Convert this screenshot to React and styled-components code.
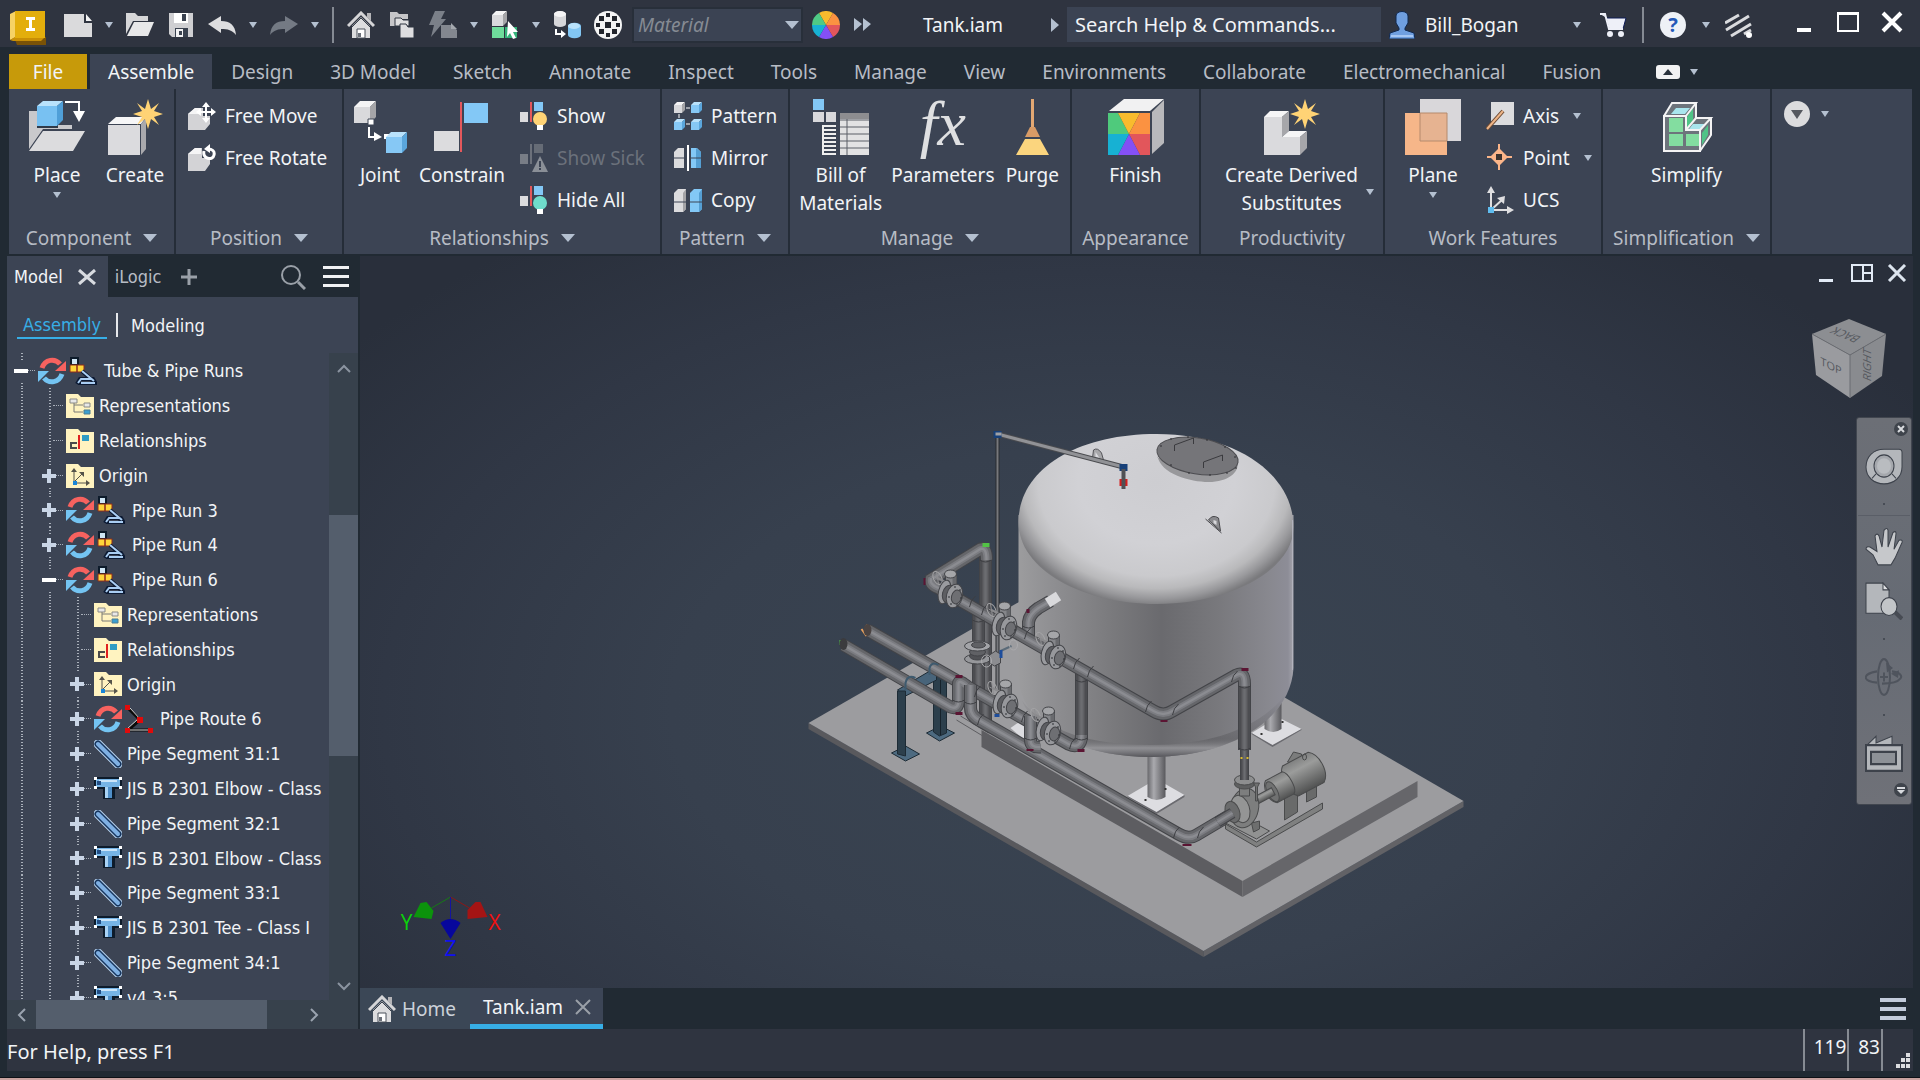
import React, { useState } from "react";
import styled, { createGlobalStyle, css } from "styled-components";

const colors = {
  frame: "#212a33",
  title: "#2f3440",
  ribbon: "#3c4454",
  field: "#3b4353",
  line: "#252d38",
  text: "#f2f4f7",
  muted: "#b7bcc5",
  caret: "#b4c0d0",
  blue: "#37aee6",
  track: "#37414c",
  thumb: "#545e6c",
};

const uiFont = `"Noto Sans", "Open Sans", sans-serif`;
const treeFont = `"DejaVu Sans Condensed", "Noto Sans", sans-serif`;

/* ------------------------------ small pieces ------------------------------ */

const Svg = ({ w = 28, h = 28, children, ...rest }) => (
  <svg
    width={w}
    height={h}
    viewBox={`0 0 ${w} ${h}`}
    aria-hidden="true"
    {...rest}
  >
    {children}
  </svg>
);

const Caret = ({ big }) =>
  big ? (
    <Svg w={14} h={8}>
      <path d="M0 0h14l-7 8z" fill={colors.caret} />
    </Svg>
  ) : (
    <Svg w={8} h={6}>
      <path d="M0 0h8l-4 6z" fill={colors.caret} />
    </Svg>
  );

const Cube = ({ x = 0, y = 0, s = 20, blue }) => {
  const d = Math.round(s / 4);
  const [front, top, side] = blue
    ? ["#86c8f5", "#b9e2fb", "#5aa6dc"]
    : ["#d9d9dc", "#f4f4f5", "#a5a5a8"];
  return (
    <g transform={`translate(${x} ${y})`}>
      <path d={`M0 ${d}h${s - d}v${s - d}H0z`} fill={front} />
      <path d={`M0 ${d}L${d} 0H${s}L${s - d} ${d}z`} fill={top} />
      <path d={`M${s - d} ${d}L${s} 0V${s - d}L${s - d} ${s}z`} fill={side} />
    </g>
  );
};

const Star = ({ x, y }) => (
  <g transform={`translate(${x} ${y})`} fill="#ffd375">
    <path d="M0-15l3 10 8-6-5 8 9 3-9 3 5 8-8-6-3 10-3-10-8 6 5-8-9-3 9-3-5-8 8 6z" />
  </g>
);

const HomeIcon = () => (
  <Svg>
    <path d="M5 15l9-9 9 9v12H5z" fill="#dcdcde" />
    <path d="M20 2h4v8l-4-4z" fill="#b5b5b8" />
    <path d="M1 15L14 2l13 13" fill="none" stroke="#d5d5d7" strokeWidth="3" />
    <path d="M5 16l9-9 9 9" fill="none" stroke="#3a414c" strokeWidth="1" />
    <path d="M10 18h8v9h-8z" fill="#fff" stroke="#4b515b" />
    <path d="M11 22h3v4h-3z" fill="#6a6f78" />
  </Svg>
);

const ColorWheel = () => (
  <Svg>
    <path d="M14 14L7 2A14 14 0 0 1 21 2z" fill="#f9bb2d" />
    <path d="M14 14L21 2A14 14 0 0 1 28 14z" fill="#fb9241" />
    <path d="M14 14H28A14 14 0 0 1 21 26z" fill="#e2565b" />
    <path d="M14 14L21 26A14 14 0 0 1 7 26z" fill="#8450f5" />
    <path d="M14 14L7 26A14 14 0 0 1 0 14z" fill="#17b1d3" />
    <path d="M14 14H0A14 14 0 0 1 7 2z" fill="#4fca85" />
  </Svg>
);

/* --------------------------------- icons --------------------------------- */

const quick = {
  new: (
    <Svg>
      <path d="M0 3h20v9h8v14H0z" fill="#dadadc" />
      <path d="M22 3l6 7h-6z" fill="#f2f2f3" />
    </Svg>
  ),
  open: (
    <Svg>
      <path d="M0 2h9l3 3h10v5H7L0 23z" fill="#d6d6d8" />
      <path d="M8 11h20l-6 14H1z" fill="#e8e8e9" />
    </Svg>
  ),
  save: (
    <Svg>
      <path d="M2 2h24v24H5l-3-3z" fill="#cfcfd2" />
      <path d="M7 2h14v10H7z" fill="#fff" />
      <path d="M15 3h4v7h-4z" fill="#3a4250" />
      <path d="M8 17h13v9H8z" fill="#3a4250" />
      <path d="M9 18h7v8H9z" fill="#f3f3f4" />
      <path d="M12 20h3v4h-3z" fill="#3a4250" />
    </Svg>
  ),
  undo: (
    <Svg>
      <path d="M0 13l13-8v5c9 0 14 4 15 14-4-5-8-6-15-6v4z" fill="#dedee0" />
    </Svg>
  ),
  redo: (
    <Svg>
      <path d="M28 13L15 5v5C6 10 1 14 0 24c4-5 8-6 15-6v4z" fill="#747a84" />
    </Svg>
  ),
  folders: (
    <Svg>
      <path d="M2 1h7l2 2h9v5h-9v7H2z" fill="#c5c5c8" />
      <path d="M7 7h6l2 2h6v6H7z" fill="#dfdfe0" stroke="#2f3440" />
      <path d="M12 13h6l2 3h6v11H12z" fill="#dedee0" stroke="#2f3440" />
    </Svg>
  ),
  bolt: (
    <Svg>
      <path d="M6 0h10l-4 8h5L2 26l3-12H0z" fill="#7b8089" />
      <path d="M12 14h10l6 5v8H12z" fill="#83878f" />
      <path d="M22 12l6 6h-6z" fill="#a4a8ae" />
    </Svg>
  ),
  select: (
    <Svg>
      <Cube x={1} y={0} s={15} />
      <path d="M1 16h12v11H1z" fill="#6fdc9b" />
      <path d="M14 16h12v11H14z" fill="#35b37a" />
      <path d="M17 10l10 11h-5l3 6-3 1-3-6-3 4z" fill="#fff" />
    </Svg>
  ),
  derive: (
    <Svg>
      <path d="M1 3a6 3 0 0 1 12 0v10a6 3 0 0 1-12 0z" fill="#d6d6d9" />
      <ellipse cx="7" cy="3" rx="6" ry="3" fill="#f4f4f5" />
      <path d="M3 18v5h6" fill="none" stroke="#fff" strokeWidth="2" />
      <path d="M8 19l5 4-5 4z" fill="#fff" />
      <path d="M15 15a6 3 0 0 1 13 0v9a6 3 0 0 1-13 0z" fill="#82c6f3" />
      <ellipse cx="21" cy="15" rx="6" ry="3" fill="#b9e2fb" />
    </Svg>
  ),
  ball: (
    <Svg>
      <circle cx="14" cy="14" r="14" fill="#f4f4f4" />
      <g fill="#22252c">
        <path d="M11 11h6v6h-6zM5 5h5v5H5zM18 5h5v5h-5zM5 18h5v5H5zM18 18h5v5h-5z" />
        <path d="M12 2h4v4h-4zM12 22h4v4h-4zM2 12h4v4H2zM22 12h4v4h-4z" />
      </g>
    </Svg>
  ),
};

const FxMark = styled.i`
  flex: none;
  height: 56px;
  color: #dfe0e2;
  font-family: "Liberation Serif", serif;
  font-size: 64px;
  line-height: 50px;
`;

const big = {
  place: (
    <Svg w={56} h={56}>
      <path d="M0 12h9v14h34v4H14L0 50z" fill="#c9c9cc" />
      <path d="M8 8h21v21H8z" fill="#2f3a49" />
      <path d="M8 7h20v20H8z" fill="#78c1f2" />
      <path d="M8 7l6-5h20l-6 5z" fill="#b9e2fb" />
      <path d="M28 7l6-5v19l-6 6z" fill="#4f9fd8" />
      <path d="M14 32h42L44 52H0z" fill="#dcdcde" />
      <path d="M36 3h14v10" fill="none" stroke="#fff" strokeWidth="2" />
      <path d="M44 12h12l-6 11z" fill="#fff" />
    </Svg>
  ),
  create: (
    <Svg w={56} h={56}>
      <path d="M1 26h32v30H1z" fill="#dbdbde" />
      <path d="M1 25l8-7h30l-5 7z" fill="#f6f6f7" />
      <path d="M34 25l5-6v31l-5 6z" fill="#a9a9ad" />
      <Star x={41} y={15} />
    </Svg>
  ),
  joint: (
    <Svg w={56} h={56}>
      <Cube x={2} y={2} s={22} />
      <path d="M16 20h6v6h-6z" fill="#fff" stroke="#3c4454" />
      <path d="M17 28v10h7" fill="none" stroke="#fff" strokeWidth="2" />
      <path d="M22 33l8 5-8 4z" fill="#fff" />
      <path d="M32 35h5v5h-5z" fill="#fff" />
      <Cube x={34} y={33} s={21} blue />
    </Svg>
  ),
  constrain: (
    <Svg w={56} h={56}>
      <path d="M0 32h25v20H0z" fill="#dcdcde" />
      <path d="M30 4h24v20H30z" fill="#83c8f6" />
      <path d="M26 3h2v50h-2z" fill="#e4585c" />
    </Svg>
  ),
  bom: (
    <Svg w={56} h={56}>
      <path d="M0 0h11v11H0z" fill="#83c8f6" />
      <path d="M0 13h11v10H0zM13 13h10v10H13z" fill="#d9d9dc" />
      <path
        d="M10 26v30M10 27h13M10 31h13M10 35h13M10 39h13M10 43h13M10 47h13M10 51h13M10 55h13"
        fill="none"
        stroke="#eee"
        strokeWidth="2"
      />
      <path d="M27 14h29v42H27z" fill="#e2e2e3" />
      <path d="M27 14h29v6H27z" fill="#8d8d90" />
      <path
        d="M27 21h29M27 28h29M27 35h29M27 42h29M27 49h29M34 20v36"
        stroke="#5b5f66"
        fill="none"
      />
    </Svg>
  ),
  fx: <FxMark aria-hidden="true">fx</FxMark>,
  purge: (
    <Svg w={56} h={56}>
      <path d="M27 0h3v29h-3z" fill="#e3a873" />
      <path d="M26 28h5l5 10H21z" fill="#d89b66" />
      <path d="M21 40h15l9 16H12z" fill="#fbd57e" />
    </Svg>
  ),
  finish: (
    <Svg w={56} h={56}>
      <path d="M1 12L16 0h40L42 12z" fill="#f1f1f2" />
      <path d="M44 13L56 1v43L44 55z" fill="#b9b9bc" />
      <path d="M0 14h10l11 21H0z" fill="#4fca7c" />
      <path d="M10 14h22L21 35z" fill="#f9bb2d" />
      <path d="M32 14h10v21H21z" fill="#fb9241" />
      <path d="M21 35h21v21H32z" fill="#e2565b" />
      <path d="M21 35l11 21H10z" fill="#8450f5" />
      <path d="M0 35h21L10 56H0z" fill="#17b1d3" />
    </Svg>
  ),
  derived: (
    <Svg w={56} h={56}>
      <path d="M0 18h18v20h18v18H0z" fill="#dadadd" />
      <path d="M0 18l6-6h19l-7 6z" fill="#f5f5f6" />
      <path d="M18 18l7-6v20l-7 6z" fill="#a6a6aa" />
      <path d="M18 38l7-6h18l-7 6z" fill="#f5f5f6" />
      <path d="M36 38l7-6v17l-7 7z" fill="#a6a6aa" />
      <Star x={41} y={15} />
    </Svg>
  ),
  plane: (
    <Svg w={56} h={56}>
      <path d="M15 0h41v42H15z" fill="#d9d7da" />
      <path d="M0 14h42v42H0z" fill="#f6b689" />
      <path d="M15 14h27v28H15z" fill="#e6b391" stroke="#b58a6c" />
    </Svg>
  ),
  simplify: (
    <Svg w={56} h={56}>
      <path d="M5 17l9-13h22v15h16v19L41 52H5z" fill="#6d747c" />
      <path
        d="M10 19h14v14H10zM10 35h14v12H10zM27 35h13v12H27z"
        fill="#83dda0"
      />
      <path d="M12 15l5-6h14l-5 6z" fill="#a9e6ee" />
      <path d="M28 18l6-9v14l-6 6z" fill="#4fc487" />
      <path d="M30 30l4-5h12l-4 5z" fill="#a9e6ee" />
      <path d="M43 34l6-8v10l-6 10z" fill="#4fc487" />
      <path
        d="M5 17v35h36V31H27V17zM5 17L13 4h24L27 17M37 4v15h15L41 31M52 19v17L41 52M27 31l10-12"
        fill="none"
        stroke="#f4f4f5"
        strokeWidth="2"
      />
    </Svg>
  ),
};

const RelIcon = ({ dim, children }) => (
  <Svg>
    <path d="M0 10h8v10H0z" fill={dim ? "#787d86" : "#dcdcde"} />
    <path d="M14 0h9v9h-9z" fill={dim ? "#666c76" : "#83c8f6"} />
    <path d="M10 0h2v20h-2z" fill={dim ? "#6c717b" : "#e4585c"} />
    {children}
  </Svg>
);

const small = {
  move: (
    <Svg>
      <path d="M0 12l7-6h8v8h7v8l-5 6H0z" fill="#d3d3d6" />
      <path d="M0 12l7-6h6v6z" fill="#f5f5f6" />
      <path d="M18 3v15M11 10h15" stroke="#fff" strokeWidth="2" />
      <path
        d="M18 0l4 5h-8zM18 21l4-5h-8zM8 10l5-4v8zM28 10l-5-4v8z"
        fill="#fff"
      />
    </Svg>
  ),
  rotate: (
    <Svg>
      <path d="M0 10l7-6h7v10h8v6l-5 7H0z" fill="#d3d3d6" />
      <path d="M0 10l7-6h6v6z" fill="#f5f5f6" />
      <path
        d="M16 7c-2 8 9 10 10 4 1-4-2-6-6-6"
        fill="none"
        stroke="#fff"
        strokeWidth="3"
      />
      <path d="M22 0v9l-6-4z" fill="#fff" />
    </Svg>
  ),
  show: (
    <RelIcon>
      <circle cx="20" cy="17" r="7" fill="#ffd375" />
      <path d="M17 23h6v5h-6z" fill="#fff" />
    </RelIcon>
  ),
  sick: (
    <RelIcon dim>
      <path d="M20 12l8 16H12z" fill="#8a8f97" />
      <path d="M19 17h2v6h-2zM19 24h2v2h-2z" fill="#3c4454" />
    </RelIcon>
  ),
  hide: (
    <RelIcon>
      <circle cx="20" cy="17" r="7" fill="#6fdccb" />
      <path d="M17 23h6v5h-6z" fill="#fff" />
    </RelIcon>
  ),
  pattern: (
    <Svg>
      <Cube x={0} y={0} s={11} />
      <Cube x={17} y={0} s={11} blue />
      <Cube x={0} y={17} s={11} blue />
      <Cube x={17} y={17} s={11} blue />
      <path d="M12 6h4M12 22h4M5 12v4" stroke="#fff" strokeWidth="1" />
    </Svg>
  ),
  mirror: (
    <Svg>
      <path d="M0 8l4-4h6v20H0z" fill="#dcdcde" />
      <path d="M17 4h6l4 4v16H17z" fill="#83c8f6" />
      <path d="M22 4l5 4v16h-5z" fill="#559fd3" />
      <path d="M0 14h10M17 14h10" stroke="#3c4454" />
      <path d="M13 1h2v26h-2z" fill="#fff" />
    </Svg>
  ),
  copy: (
    <Svg>
      <path d="M0 7l4-4h8v20l-3 3H0z" fill="#dcdcde" />
      <path d="M16 7l4-4h8v20l-3 3h-9z" fill="#83c8f6" />
      <path d="M9 7l3-4v20l-3 3z" fill="#a5a5a8" />
      <path d="M25 7l3-4v20l-3 3z" fill="#559fd3" />
      <path d="M0 16h12M16 16h12" stroke="#3c4454" />
    </Svg>
  ),
  axis: (
    <Svg>
      <path d="M5 0h23v23H5z" fill="#dcdcde" />
      <path d="M1 27L17 9" stroke="#6b4a34" strokeWidth="4" />
      <path d="M1 27L17 9" stroke="#eeb587" strokeWidth="2" />
    </Svg>
  ),
  point: (
    <Svg>
      <path d="M1 13h25M13 0v26" stroke="#fbb589" strokeWidth="2" />
      <path d="M13 4l9 9-9 9-9-9z" fill="#fbb589" />
      <path d="M10 10h6v6h-6z" fill="#3a3330" />
    </Svg>
  ),
  ucs: (
    <Svg>
      <path
        d="M5 4v20h18M5 24L17 13"
        fill="none"
        stroke="#dfdfe1"
        strokeWidth="2"
      />
      <path d="M5 0l4 7H1zM28 24l-7-4v8zM19 10l-1 8-7-6z" fill="#dfdfe1" />
      <path d="M2 21h6v6H2z" fill="#5fbdf0" />
    </Svg>
  ),
};

const SyncIcon = () => (
  <Svg>
    <path
      d="M4 11C7 2 17 1 22 7"
      fill="none"
      stroke="#f7625f"
      strokeWidth="5"
    />
    <path d="M28 4v10H17z" fill="#f7625f" />
    <path
      d="M24 17C21 26 11 27 6 21"
      fill="none"
      stroke="#74c4f2"
      strokeWidth="5"
    />
    <path d="M0 25V14h11z" fill="#74c4f2" />
  </Svg>
);

const tree = {
  run: (
    <Svg>
      <path d="M2 1h7v7H2z" fill="#cfe6f5" stroke="#0d1b2b" strokeWidth="2" />
      <path d="M1 8h7v7H1zM8 8h7v7H8z" fill="#ffd53a" stroke="#8e2a1a" />
      <path
        d="M13 14l12 11M8 27l3-5h13l3 5H9"
        fill="none"
        stroke="#0c1a33"
        strokeWidth="4"
      />
      <path
        d="M13 14l12 10M9 26l3-4h10M12 26h14"
        fill="none"
        stroke="#a9cdf2"
        strokeWidth="2"
      />
    </Svg>
  ),
  reps: (
    <Svg>
      <path d="M0 2h12l3 3h13v21H0z" fill="#fff3c0" />
      <path
        d="M4 7h7v4H4zM18 11h6v4h-6z"
        fill="#e8e8e8"
        stroke="#8a8a86"
      />
      <path d="M8 11v9h9M8 13h9" fill="none" stroke="#7a7a76" />
      <path d="M18 18h6v4h-6z" fill="#3b9fd0" stroke="#4c7d93" />
    </Svg>
  ),
  rels: (
    <Svg>
      <path d="M0 2h12l3 3h13v21H0z" fill="#fff3c0" />
      <path d="M12 8h2v14h-2z" fill="#e02020" />
      <path d="M16 8h7v6h-7z" fill="#2f9cc4" />
      <path d="M11 16H5v5h6" fill="none" stroke="#4a4a4a" strokeWidth="2" />
    </Svg>
  ),
  origin: (
    <Svg>
      <path d="M0 2h12l3 3h13v21H0z" fill="#fff3c0" />
      <path d="M8 8v13h13M9 19l8-8" fill="none" stroke="#55534a" />
      <path d="M8 6l3 4H5zM24 21l-4-3v6zM18 10v5l-5-5z" fill="#55534a" />
      <path d="M7 19h4v4H7z" fill="#1a86d8" />
    </Svg>
  ),
  route: (
    <Svg>
      <path
        d="M3 3l12 12L3 25h22"
        fill="none"
        stroke="#0b0b0b"
        strokeWidth="3"
      />
      <path d="M5 3l11 12M2 24l11-10M5 25h18" fill="none" stroke="#d5d5d5" />
      <path
        d="M0 0h5v5H0zM12 12h6v6h-6zM0 23h5v5H0zM23 23h5v5h-5z"
        fill="#e00b0b"
      />
    </Svg>
  ),
  segment: (
    <Svg>
      <path
        d="M4 4l20 20"
        stroke="#b8d4f0"
        strokeWidth="9"
        strokeLinecap="round"
      />
      <path
        d="M4 4l20 20"
        stroke="#17365f"
        strokeWidth="7"
        strokeLinecap="round"
      />
      <path
        d="M4 4l20 20"
        stroke="#7fb0e3"
        strokeWidth="4"
        strokeLinecap="round"
      />
    </Svg>
  ),
  fitting: (
    <Svg>
      <path d="M0 2h28v12H0zM9 12h12v12H9z" fill="#0d1b2b" />
      <path d="M2 4h24v8H2z" fill="#76b4e6" />
      <path d="M5 5h18v2H5z" fill="#cbe5fa" />
      <path d="M11 12h3v11h-3z" fill="#a9d3f5" />
      <path d="M14 12h4v11h-4z" fill="#4f8fc9" />
      <path d="M0 2h3v3H0zM25 2h3v3h-3zM0 11h3v3H0zM25 11h3v3h-3z" fill="#fff" />
      <path d="M3 6h4v4H3z" fill="#234f86" />
    </Svg>
  ),
};

/* ---------------------------------- data ---------------------------------- */

const menuTabs = [
  "Assemble",
  "Design",
  "3D Model",
  "Sketch",
  "Annotate",
  "Inspect",
  "Tools",
  "Manage",
  "View",
  "Environments",
  "Collaborate",
  "Electromechanical",
  "Fusion",
];

const nodes = [
  { level: 0, open: true, sync: true, icon: "run", label: "Tube & Pipe Runs" },
  { level: 1, icon: "reps", label: "Representations" },
  { level: 1, icon: "rels", label: "Relationships" },
  { level: 1, open: false, icon: "origin", label: "Origin" },
  { level: 1, open: false, sync: true, icon: "run", label: "Pipe Run 3" },
  { level: 1, open: false, sync: true, icon: "run", label: "Pipe Run 4" },
  { level: 1, open: true, sync: true, icon: "run", label: "Pipe Run 6" },
  { level: 2, icon: "reps", label: "Representations" },
  { level: 2, icon: "rels", label: "Relationships" },
  { level: 2, open: false, icon: "origin", label: "Origin" },
  { level: 2, open: false, sync: true, icon: "route", label: "Pipe Route 6" },
  { level: 2, open: false, icon: "segment", label: "Pipe Segment 31:1" },
  { level: 2, open: false, icon: "fitting", label: "JIS B 2301 Elbow - Class" },
  { level: 2, open: false, icon: "segment", label: "Pipe Segment 32:1" },
  { level: 2, open: false, icon: "fitting", label: "JIS B 2301 Elbow - Class" },
  { level: 2, open: false, icon: "segment", label: "Pipe Segment 33:1" },
  { level: 2, open: false, icon: "fitting", label: "JIS B 2301 Tee - Class I" },
  { level: 2, open: false, icon: "segment", label: "Pipe Segment 34:1" },
  { level: 2, open: false, icon: "fitting", label: "v4 3:5" },
];

/* -------------------------------- title bar ------------------------------- */

const TitleBar = () => (
  <TitleBarStyled>
    <AppButton aria-label="Application menu">
      <Svg w={36} h={34}>
        <path d="M4 26h32v8H7z" fill="#7a5206" />
        <path d="M0 3l6-3v26l-6 3z" fill="#f6d265" />
        <path d="M0 29l5-3h30l-4 4H3z" fill="#c98f06" />
        <path d="M5 0h30v27H5z" fill="#e3ae0c" />
        <path d="M16 6h9v3h-3v8h3v3h-9v-3h3V9h-3z" fill="#fff" />
      </Svg>
    </AppButton>
    <QuickBar>
      <IconButton aria-label="New">{quick.new}</IconButton>
      <Caret />
      <IconButton aria-label="Open">{quick.open}</IconButton>
      <IconButton aria-label="Save">{quick.save}</IconButton>
      <IconButton aria-label="Undo">{quick.undo}</IconButton>
      <Caret />
      <IconButton aria-label="Redo">{quick.redo}</IconButton>
      <Caret />
      <Divider />
      <IconButton aria-label="Home">
        <HomeIcon />
      </IconButton>
      <IconButton aria-label="Projects">{quick.folders}</IconButton>
      <IconButton aria-label="Update">{quick.bolt}</IconButton>
      <Caret />
      <IconButton aria-label="Select">{quick.select}</IconButton>
      <Caret />
      <IconButton aria-label="Derive">{quick.derive}</IconButton>
      <IconButton aria-label="Appearance">{quick.ball}</IconButton>
    </QuickBar>
    <Combo>
      <select aria-label="Material">
        <option>Material</option>
      </select>
      <Svg w={14} h={8}>
        <path d="M0 0h14l-7 8z" fill={colors.caret} />
      </Svg>
    </Combo>
    <WheelButton aria-label="Color">
      <ColorWheel />
    </WheelButton>
    <MoreButton aria-label="More">
      <Svg w={17} h={13}>
        <path d="M0 0l8 6-8 7zM9 0l8 6-8 7z" fill={colors.caret} />
      </Svg>
    </MoreButton>
    <DocTitle>Tank.iam</DocTitle>
    <TitleArrow w={8} h={14}>
      <path d="M0 0l8 7-8 7z" fill={colors.caret} />
    </TitleArrow>
    <SearchInput
      aria-label="Search Help & Commands"
      placeholder="Search Help & Commands..."
    />
    <UserButton>
      <Svg w={26} h={28}>
        <path
          d="M7 5c0-6 12-6 12 0v7l-3 5v2l9 3 1 6H0l1-6 9-3v-2l-3-5z"
          fill="#6f9fe0"
          stroke="#10284f"
        />
        <path d="M2 25h22" stroke="#a5c6f3" strokeWidth="2" />
      </Svg>
      <span>Bill_Bogan</span>
      <Caret />
    </UserButton>
    <RightTools>
      <IconButton aria-label="Cart">
        <Svg>
          <path
            d="M1 3h5l4 15h14l3-11H8"
            fill="#eef0f8"
            stroke="#0c1a55"
            strokeWidth="1"
          />
          <path d="M1 3h5l4 15h14" fill="none" stroke="#eef0f8" strokeWidth="2" />
          <circle cx="11" cy="23" r="3" fill="#eef0f8" />
          <circle cx="22" cy="23" r="3" fill="#eef0f8" />
        </Svg>
      </IconButton>
      <Divider />
      <IconButton aria-label="Help">
        <HelpMark>?</HelpMark>
      </IconButton>
      <Caret />
      <IconButton aria-label="What's new">
        <Svg>
          <path
            d="M0 12L14 4M1 19L24 5M6 25l20-12M19 23l7-4"
            stroke="#dadbde"
            strokeWidth="3"
          />
          <circle cx="24" cy="24" r="3" fill="#fff" />
        </Svg>
      </IconButton>
    </RightTools>
    <WindowControls>
      <IconButton aria-label="Minimize">
        <Svg w={22} h={22}>
          <path d="M4 17h14v4H4z" fill="#fff" />
        </Svg>
      </IconButton>
      <IconButton aria-label="Maximize">
        <Svg w={22} h={22}>
          <path
            d="M1 2h20v18H1z"
            fill="none"
            stroke="#fff"
            strokeWidth="2"
          />
          <path d="M0 1h22v3H0z" fill="#fff" />
        </Svg>
      </IconButton>
      <IconButton aria-label="Close">
        <Svg w={22} h={22}>
          <path d="M2 2l18 18M20 2L2 20" stroke="#fff" strokeWidth="4" />
        </Svg>
      </IconButton>
    </WindowControls>
  </TitleBarStyled>
);

const TitleBarStyled = styled.header`
  display: flex;
  align-items: center;
  height: 47px;
  padding: 0 14px 4px 10px;
  background: ${colors.title};
`;

const bareButton = css`
  display: flex;
  align-items: center;
  justify-content: center;
  padding: 0;
  border: 0;
  background: none;
  color: inherit;
  font: inherit;
  cursor: pointer;
`;

const AppButton = styled.button`
  ${bareButton}
  margin-top: 12px;
`;

const IconButton = styled.button`
  ${bareButton}
  flex: none;
  min-width: 28px;
  height: 28px;
`;

const WheelButton = styled(IconButton)`
  margin-top: 6px;
`;

const QuickBar = styled.div`
  display: flex;
  align-items: center;
  gap: 13px;
  margin: 6px 10px 0 18px;
`;

const Divider = styled.span`
  width: 2px;
  height: 36px;
  background: #858a93;
`;

const Combo = styled.div`
  display: flex;
  align-items: center;
  width: 171px;
  height: 36px;
  margin: 6px 9px 0 0;
  padding-right: 2px;
  border: 2px solid #282f3a;
  background: ${colors.field};

  select {
    flex: 1;
    min-width: 0;
    padding: 0 4px;
    border: 0;
    background: none;
    color: #868b93;
    font: italic 19px ${uiFont};
    appearance: none;
  }
`;

const MoreButton = styled.button`
  ${bareButton}
  margin: 6px 52px 0 14px;
`;

const DocTitle = styled.h1`
  width: 128px;
  margin: 6px 0 0;
  font-size: 19px;
  font-weight: 400;
`;

const TitleArrow = styled(Svg)`
  margin-top: 6px;
`;

const SearchInput = styled.input`
  flex: 1;
  min-width: 0;
  max-width: 314px;
  height: 35px;
  margin: 6px 8px 0;
  padding: 0 8px;
  border: 0;
  background: ${colors.field};
  color: ${colors.text};
  font: 20px ${uiFont};

  &::placeholder {
    color: ${colors.text};
    opacity: 1;
  }
`;

const UserButton = styled.button`
  ${bareButton}
  flex: none;
  gap: 10px;
  width: 192px;
  margin-top: 6px;
  font-size: 19px;

  svg:last-child {
    margin-left: auto;
  }
`;

const RightTools = styled.div`
  display: flex;
  align-items: center;
  gap: 15px;
  margin: 6px auto 0 18px;
`;

const HelpMark = styled.span`
  width: 26px;
  height: 26px;
  border-radius: 50%;
  background: #eef1f6;
  color: #2459b8;
  font-size: 20px;
  font-weight: 700;
  line-height: 26px;
`;

const WindowControls = styled.div`
  display: flex;
  gap: 16px;
`;

/* ---------------------------------- ribbon -------------------------------- */

const BigButton = ({ icon, label, width, drop }) => (
  <BigButtonStyled $width={width}>
    {big[icon]}
    <span>{label}</span>
    {drop && <Caret />}
  </BigButtonStyled>
);

const SmallButton = ({ icon, label, drop, disabled }) => (
  <SmallButtonStyled disabled={disabled}>
    {small[icon]}
    <span>{label}</span>
    {drop && <Caret />}
  </SmallButtonStyled>
);

const Group = ({ title, width, drop, center, children }) => (
  <GroupStyled $width={width} aria-label={title}>
    <GroupBody $center={center}>{children}</GroupBody>
    <GroupTitle>
      {title}
      {drop && <Caret big />}
    </GroupTitle>
  </GroupStyled>
);

const Ribbon = () => {
  const [active, setActive] = useState("Assemble");
  return (
    <>
      <MenuTabs>
        <FileTab>File</FileTab>
        {menuTabs.map((tab) => (
          <MenuTab
            key={tab}
            $active={tab === active}
            onClick={() => setActive(tab)}
          >
            {tab}
          </MenuTab>
        ))}
        <CollapseButton aria-label="Collapse ribbon">
          <Svg w={24} h={14}>
            <rect width="24" height="14" rx="3" fill="#f2f2f3" />
            <path d="M7 10l5-6 5 6z" fill="#2a323c" />
          </Svg>
          <Caret />
        </CollapseButton>
      </MenuTabs>
      <RibbonStyled>
        <Group title="Component" width={167} drop>
          <Pad $size={9} />
          <BigButton icon="place" label="Place" width={78} drop />
          <BigButton icon="create" label="Create" width={78} />
        </Group>
        <Group title="Position" width={168} drop>
          <SmallColumn $pad={12}>
            <SmallButton icon="move" label="Free Move" />
            <SmallButton icon="rotate" label="Free Rotate" />
          </SmallColumn>
        </Group>
        <Group title="Relationships" width={318} drop>
          <BigButton icon="joint" label="Joint" width={72} />
          <BigButton icon="constrain" label="Constrain" width={92} />
          <SmallColumn $pad={12}>
            <SmallButton icon="show" label="Show" />
            <SmallButton icon="sick" label="Show Sick" disabled />
            <SmallButton icon="hide" label="Hide All" />
          </SmallColumn>
        </Group>
        <Group title="Pattern" width={128} drop>
          <SmallColumn $pad={12}>
            <SmallButton icon="pattern" label="Pattern" />
            <SmallButton icon="mirror" label="Mirror" />
            <SmallButton icon="copy" label="Copy" />
          </SmallColumn>
        </Group>
        <Group title="Manage" width={282} drop>
          <BigButton icon="bom" label="Bill of Materials" width={102} />
          <BigButton icon="fx" label="Parameters" width={104} />
          <BigButton icon="purge" label="Purge" width={76} />
        </Group>
        <Group title="Appearance" width={129} center>
          <BigButton icon="finish" label="Finish" width={90} />
        </Group>
        <Group title="Productivity" width={184}>
          <Pad $size={16} />
          <BigButton
            icon="derived"
            label="Create Derived Substitutes"
            width={149}
          />
          <SideCaret>
            <Caret />
          </SideCaret>
        </Group>
        <Group title="Work Features" width={218}>
          <BigButton icon="plane" label="Plane" width={96} drop />
          <SmallColumn $pad={5}>
            <SmallButton icon="axis" label="Axis" drop />
            <SmallButton icon="point" label="Point" drop />
            <SmallButton icon="ucs" label="UCS" />
          </SmallColumn>
        </Group>
        <Group title="Simplification" width={169} drop center>
          <BigButton icon="simplify" label="Simplify" width={90} />
        </Group>
        <Overflow aria-label="Ribbon options">
          <Svg>
            <circle cx="14" cy="14" r="13" fill="#dcdcde" />
            <path d="M8 10h12l-6 9z" fill="#55585f" />
          </Svg>
          <Caret />
        </Overflow>
      </RibbonStyled>
    </>
  );
};

const MenuTabs = styled.nav`
  display: flex;
  align-items: stretch;
  gap: 1px;
  height: 42px;
  padding: 7px 8px 0 9px;
  font-size: 19px;
`;

const MenuTab = styled.button`
  ${bareButton}
  padding: 0 18px;
  background: ${(p) => (p.$active ? colors.ribbon : "transparent")};
  color: ${(p) => (p.$active ? colors.text : colors.muted)};
`;

const FileTab = styled.button`
  ${bareButton}
  width: 78px;
  margin-right: 2px;
  background: #c79a0a;
  color: ${colors.text};
`;

const CollapseButton = styled.button`
  ${bareButton}
  gap: 10px;
  margin-left: 36px;
`;

const RibbonStyled = styled.section`
  display: flex;
  height: 165px;
  margin: 0 8px 0 9px;
  background: ${colors.ribbon};
  font-size: 19px;
`;

const GroupStyled = styled.section`
  display: flex;
  flex-direction: column;
  flex: none;
  width: ${(p) => p.$width}px;
  padding-top: 6px;
  border-right: 2px solid ${colors.line};
`;

const GroupBody = styled.div`
  display: flex;
  height: 126px;
  justify-content: ${(p) => (p.$center ? "center" : "flex-start")};
`;

const GroupTitle = styled.h2`
  display: flex;
  align-items: center;
  justify-content: center;
  gap: 12px;
  height: 33px;
  margin: 0;
  color: ${colors.muted};
  font-size: 19px;
  font-weight: 400;
`;

const BigButtonStyled = styled.button`
  ${bareButton}
  flex-direction: column;
  justify-content: flex-start;
  width: ${(p) => p.$width}px;
  padding-top: 4px;
  line-height: 28px;

  span {
    margin: 6px 0 3px;
  }
`;

const SmallColumn = styled.div`
  display: flex;
  flex-direction: column;
  padding-left: ${(p) => p.$pad}px;
`;

const SmallButtonStyled = styled.button`
  ${bareButton}
  justify-content: flex-start;
  gap: 9px;
  height: 42px;
  white-space: nowrap;

  &:disabled {
    color: #6b717b;
  }

  svg:nth-child(3) {
    margin-left: 5px;
  }
`;

const Pad = styled.span`
  flex: none;
  width: ${(p) => p.$size}px;
`;

const SideCaret = styled.span`
  padding-top: 80px;
`;

const Overflow = styled.button`
  ${bareButton}
  align-self: flex-start;
  gap: 10px;
  margin: 11px 0 0 11px;
`;

/* ------------------------------ model browser ----------------------------- */

const TreeRow = ({ node }) => (
  <TreeRowStyled>
    {Array.from({ length: node.level }, (_, i) => (
      <Guide key={i} />
    ))}
    <ToggleCell>
      {node.open !== undefined && (
        <Toggle aria-label={node.open ? "Collapse" : "Expand"}>
          <Svg w={14} h={14}>
            <path
              d={node.open ? "M0 5h14v4H0z" : "M0 5h5V0h4v5h5v4H9v5H5V9H0z"}
              fill={node.open ? "#fff" : "#c9d5e6"}
            />
          </Svg>
        </Toggle>
      )}
    </ToggleCell>
    {node.sync && <SyncIcon />}
    {tree[node.icon]}
    <span>{node.label}</span>
  </TreeRowStyled>
);

const Browser = () => (
  <BrowserStyled>
    <PanelTabs>
      <PanelTab $active>
        Model
        <Svg w={18} h={16}>
          <path d="M1 1l16 14M17 1L1 15" stroke="#d8dbe0" strokeWidth="3" />
        </Svg>
      </PanelTab>
      <PanelTab>
        iLogic
        <Svg w={18} h={18}>
          <path d="M9 1v16M1 9h16" stroke="#9aa0a8" strokeWidth="3" />
        </Svg>
      </PanelTab>
      <PanelTools>
        <IconButton aria-label="Search">
          <Svg w={26} h={26}>
            <circle
              cx="11"
              cy="11"
              r="9"
              fill="none"
              stroke="#9aa0a8"
              strokeWidth="2"
            />
            <path d="M18 18l7 7" stroke="#9aa0a8" strokeWidth="3" />
          </Svg>
        </IconButton>
        <IconButton aria-label="Menu">
          <Svg w={26} h={22}>
            <path d="M0 0h26v3H0zM0 9h26v3H0zM0 18h26v3H0z" fill="#f0f1f3" />
          </Svg>
        </IconButton>
      </PanelTools>
    </PanelTabs>
    <SubTabs>
      <SubTab $active>Assembly</SubTab>
      <SubTab>Modeling</SubTab>
    </SubTabs>
    <TreeArea>
      <TreeList>
        {nodes.map((node, i) => (
          <TreeRow key={i} node={node} />
        ))}
      </TreeList>
      <VScroll>
        <Svg w={14} h={9}>
          <path d="M1 8l6-6 6 6" fill="none" stroke="#8b94a0" strokeWidth="2" />
        </Svg>
        <VThumb />
        <Svg w={14} h={9}>
          <path d="M1 1l6 6 6-6" fill="none" stroke="#8b94a0" strokeWidth="2" />
        </Svg>
      </VScroll>
    </TreeArea>
    <HScroll>
      <Svg w={9} h={14}>
        <path d="M8 1L2 7l6 6" fill="none" stroke="#9aa3af" strokeWidth="2" />
      </Svg>
      <HThumb />
      <Svg w={9} h={14}>
        <path d="M1 1l6 6-6 6" fill="none" stroke="#9aa3af" strokeWidth="2" />
      </Svg>
    </HScroll>
  </BrowserStyled>
);

const BrowserStyled = styled.aside`
  display: flex;
  flex-direction: column;
  width: 351px;
  min-height: 0;
  background: ${colors.ribbon};
  font-family: ${treeFont};
  font-size: 18px;
`;

const PanelTabs = styled.div`
  display: flex;
  height: 41px;
  background: ${colors.frame};
`;

const PanelTab = styled.button`
  ${bareButton}
  gap: ${(p) => (p.$active ? 15 : 19)}px;
  padding: 0 ${(p) => (p.$active ? 12 : 7)}px 0 7px;
  background: ${(p) => (p.$active ? colors.ribbon : "transparent")};
  color: ${(p) => (p.$active ? colors.text : colors.muted)};
`;

const PanelTools = styled.div`
  display: flex;
  align-items: center;
  gap: 15px;
  margin-left: auto;
  padding-right: 8px;
`;

const SubTabs = styled.div`
  display: flex;
  align-items: center;
  height: 56px;
  padding-left: 10px;
`;

const SubTab = styled.button`
  ${bareButton}
  height: 28px;
  padding: 0 6px;
  border-bottom: 2px solid ${(p) => (p.$active ? colors.blue : "transparent")};
  color: ${(p) => (p.$active ? colors.blue : colors.text)};

  & + & {
    height: 24px;
    margin-left: 9px;
    padding-left: 13px;
    border-left: 2px solid #e6e8eb;
    border-bottom: 0;
  }
`;

const TreeArea = styled.div`
  display: flex;
  flex: 1;
  min-height: 0;
`;

const TreeList = styled.ul`
  flex: 1;
  min-width: 0;
  margin: 0;
  padding: 0;
  overflow: hidden;
  list-style: none;
`;

const dotted = css`
  background: repeating-linear-gradient(#a9b0ba 0 1px, transparent 1px 3px) 14px
    0 / 2px 100% no-repeat;
`;

const TreeRowStyled = styled.li`
  display: flex;
  align-items: center;
  height: 35px;
  white-space: nowrap;

  &:nth-child(5n) {
    height: 34px;
  }

  > svg {
    flex: none;
    margin-left: 3px;
  }

  > svg + svg {
    margin-right: 2px;
  }

  > span:last-child {
    margin-left: 5px;
  }
`;

const Guide = styled.span`
  flex: none;
  align-self: stretch;
  width: 28px;
  ${dotted}
`;

const ToggleCell = styled.span`
  display: flex;
  flex: none;
  align-items: center;
  align-self: stretch;
  width: 28px;
  ${dotted}

  &::after {
    content: "";
    width: 10px;
    margin-left: auto;
    border-top: 1px dotted #a9b0ba;
  }
`;

const Toggle = styled.button`
  ${bareButton}
  width: 16px;
  height: 22px;
  margin-left: 7px;
  background: ${colors.ribbon};

  svg {
    flex: none;
  }
`;

const VScroll = styled.div`
  display: flex;
  flex-direction: column;
  align-items: center;
  width: 29px;
  padding: 11px 0 9px;
  background: ${colors.track};
`;

const VThumb = styled.div`
  width: 100%;
  height: 241px;
  margin: 142px 0 auto;
  background: ${colors.thumb};
`;

const HScroll = styled.div`
  display: flex;
  align-items: center;
  height: 29px;
  padding: 0 39px 0 10px;
  background: ${colors.track};
`;

const HThumb = styled.div`
  width: 231px;
  height: 100%;
  margin: 0 auto 0 10px;
  background: ${colors.thumb};
`;

/* -------------------------------- 3D drawing ------------------------------- */

// one pipe: dark outline, body and a lighter streak along the centre
const Pipe = ({ d, w = 12, dark }) => (
  <g fill="none" strokeLinejoin="round">
    <path d={d} stroke="#434448" strokeWidth={w + 1} />
    <path d={d} stroke={dark ? "#4c4d51" : "#65666a"} strokeWidth={w - 1} />
    <path d={d} stroke={dark ? "#606165" : "#7b7c81"} strokeWidth={w / 2} />
    <path d={d} stroke={dark ? "#6c6d71" : "#8b8c91"} strokeWidth={w / 5} />
  </g>
);

const Valve = ({ x, y }) => (
  <g transform={`translate(${x} ${y})`} stroke="#434448">
    <ellipse
      cx="-13"
      cy="-16"
      rx="4"
      ry="7"
      fill="none"
      stroke="#a3a3a5"
      transform="rotate(-25 -13 -16)"
    />
    <path d="M-16-17l6 3M-14-22l2 12" stroke="#8f8f92" />
    <path d="M-13-16l10 5" stroke="#8a8a8d" strokeWidth="2" />
    <path d="M-5-19v15H6v-15z" fill="#85868a" />
    <path d="M2-17v12h4v-13z" fill="#696a6e" stroke="none" />
    <ellipse cx="0" cy="-20" rx="6" ry="4" fill="#a5a6a9" />
    <ellipse
      cx="-6"
      cy="-2"
      rx="6"
      ry="12"
      fill="#9a9b9f"
      transform="rotate(14 -6 -2)"
    />
    <ellipse
      cx="-2"
      cy="0"
      rx="6"
      ry="9"
      fill="#5d5e62"
      transform="rotate(14 -2 0)"
    />
    <ellipse
      cx="4"
      cy="2"
      rx="8"
      ry="12"
      fill="#97989c"
      transform="rotate(14 4 2)"
    />
    <ellipse
      cx="6"
      cy="3"
      rx="5"
      ry="7"
      fill="#6e6f73"
      transform="rotate(14 6 3)"
    />
    <path
      d="M4-7h1M9-4h1M10 4h1M6 11h1M0 10h1M-2 3h1"
      stroke="#2f3034"
      strokeWidth="2"
    />
  </g>
);

const Rings = ({ points }) => (
  <g stroke="#3d3e42" strokeWidth="1">
    {points.map(([x, y, vertical]) => (
      <path
        key={`${x}-${y}`}
        d={
          vertical
            ? `M${x - 6} ${y}q6 4 12 0`
            : `M${x + 3} ${y - 6}q-5 4 -6 11`
        }
        fill="none"
      />
    ))}
  </g>
);

const Model = () => (
  <ModelSvg
    viewBox="360 256 1552 732"
    preserveAspectRatio="xMidYMid meet"
    role="img"
    aria-label="Tank assembly"
  >
    <defs>
      <linearGradient id="body" x1="0" x2="1">
        <stop offset="0" stopColor="#9c9c9e" />
        <stop offset="0.12" stopColor="#8f8f92" />
        <stop offset="0.35" stopColor="#79797c" />
        <stop offset="0.52" stopColor="#6a6a6e" />
        <stop offset="0.72" stopColor="#78787c" />
        <stop offset="0.92" stopColor="#898990" />
        <stop offset="0.98" stopColor="#8d8d97" />
        <stop offset="1" stopColor="#a4a4ac" />
      </linearGradient>
      <radialGradient
        id="dome"
        gradientUnits="userSpaceOnUse"
        cx="0"
        cy="0"
        r="1"
        gradientTransform="translate(1156 482) scale(156 124)"
      >
        <stop offset="0" stopColor="#cdcdd1" />
        <stop offset="0.5" stopColor="#d1d1d5" />
        <stop offset="0.76" stopColor="#cacacd" />
        <stop offset="0.86" stopColor="#b9b9bb" />
        <stop offset="0.94" stopColor="#98989b" />
        <stop offset="1" stopColor="#7a7a7d" />
      </radialGradient>
      <linearGradient id="belly" x1="0" x2="0" y1="0" y2="1">
        <stop offset="0" stopColor="#606064" stopOpacity="0" />
        <stop offset="0.72" stopColor="#505054" stopOpacity="0.4" />
        <stop offset="0.86" stopColor="#98989c" stopOpacity="0.8" />
        <stop offset="1" stopColor="#55555a" stopOpacity="1" />
      </linearGradient>
      <linearGradient id="leg" x1="0" x2="1">
        <stop offset="0" stopColor="#68686c" />
        <stop offset="0.35" stopColor="#aaaaae" />
        <stop offset="1" stopColor="#59595d" />
      </linearGradient>
      <linearGradient id="motor" x1="0" x2="0" y1="0" y2="1">
        <stop offset="0" stopColor="#7f8080" />
        <stop offset="0.3" stopColor="#9b9c9b" />
        <stop offset="1" stopColor="#515252" />
      </linearGradient>
    </defs>

    {/* base slab and plinth */}
    <path d="M808 723l395 228v6L808 729z" fill="#59595d" />
    <path d="M1203 951l260-150v6l-260 150z" fill="#626266" />
    <path d="M808 723l261-150 394 228-260 150z" fill="#9c9c9f" />
    <path d="M981 730l261 151v16L981 747z" fill="#5d5d61" />
    <path d="M1242 881l175-100v16l-175 100z" fill="#66666a" />
    <path
      d="M956 720l28 17M960 716l28 17M964 712l28 17"
      stroke="#5d5d61"
      fill="none"
    />

    {/* tank legs */}
    <g>
      <path d="M1010 728l10-7 12 6-8 13z" fill="#dcdce0" />
      <path d="M1251 733l26-16 24 12-29 17z" fill="#dddde1" />
      <path d="M1251 733l21 12 29-16v1l-29 17-21-13z" fill="#6b6b70" />
      <path d="M1264 700h17v29q-8 6-17 0z" fill="url(#leg)" />
      <path d="M1127 796l29-17 28 16-28 18z" fill="#dddde1" />
      <path d="M1127 796l29 16 28-17v2l-28 17-29-17z" fill="#6b6b70" />
      <path d="M1147 750h18v47q-9 6-18 0z" fill="url(#leg)" />
      <path
        d="M1260 734h2M1281 722h2M1144 800h2M1164 789h2"
        stroke="#333"
        strokeWidth="2"
      />
    </g>

    {/* tank */}
    <path
      d="M1018 515V678C1022 730 1085 757 1150 757C1227 757 1290 722 1293 668V515z"
      fill="url(#body)"
    />
    <path
      d="M1021 700C1036 736 1092 757 1150 757C1215 757 1268 734 1287 692C1262 726 1215 745 1150 745C1092 745 1045 732 1021 700z"
      fill="url(#belly)"
    />
    <path
      d="M1018 522C1018 470 1075 434 1156 434C1237 434 1293 475 1293 527C1293 570 1230 604 1156 604C1082 604 1018 570 1018 522z"
      fill="url(#dome)"
    />
    <path d="M1292 520v150" stroke="#b3b3bd" />

    {/* manhole */}
    <g>
      <path
        d="M1157 456C1160 474 1190 482 1208 482C1228 482 1238 472 1237 464L1237 458H1157z"
        fill="#98989b"
      />
      <ellipse
        cx="1197"
        cy="456"
        rx="41"
        ry="18"
        transform="rotate(9 1197 456)"
        fill="#757579"
        stroke="#4c4c50"
      />
      <path
        d="M1174 451v-6l19-7v6M1203 468v-6l19-7v6"
        fill="none"
        stroke="#3a3a3e"
        strokeWidth="1"
      />
      <path
        d="M1160 446h1M1170 439h1M1187 437h1M1206 440h1M1224 447h1M1234 457h1M1235 468h1M1226 473h1M1209 475h1M1188 473h1M1170 465h1"
        stroke="#2f2f33"
        strokeWidth="2"
      />
    </g>

    {/* lifting lugs */}
    <path
      d="M1092 458l1-8q4-3 8 3l2 7zM1089 458l16 4"
      fill="#a7a7aa"
      stroke="#55555a"
    />
    <path d="M1095 457v-5l4 6z" fill="#dcdce0" />
    <path
      d="M1208 520q4-6 10-2l2 13zM1205 519l16 14"
      fill="#8a8a8e"
      stroke="#4a4a4e"
    />
    <path d="M1213 520l3 1v4l-3-2z" fill="#d8d8dc" />

    {/* thin vent line */}
    <path d="M997 437V690" stroke="#2b2d31" strokeWidth="4" />
    <path d="M997 437V690" stroke="#77787c" strokeWidth="2" />
    <path d="M997 434l126 33" stroke="#4a4b4f" strokeWidth="5" />
    <path d="M997 434l126 33" stroke="#919296" strokeWidth="3" />
    <path d="M993 431h8v7h-8zM1119 464h8v7h-8z" fill="#174079" />
    <path d="M1119 479h8v7h-8z" fill="#d41f1f" />
    <path d="M1123 469v20" stroke="#505155" strokeWidth="4" />
    <path d="M995 434h6" stroke="#a0a1a5" strokeWidth="3" />

    {/* steel supports */}
    <g stroke="#1d2b35">
      <path d="M926 733l14-7 14 7-15 8z" fill="#4d6a80" />
      <path d="M933 675h13v58l-7 3-6-4z" fill="#2c3f4c" />
      <path d="M940 680v55" stroke="#16222b" />
      <path d="M891 753l14-7 14 8-14 7z" fill="#4d6a80" />
      <path d="M897 690l34-20 5 4v6l-31 16z" fill="#48647a" />
      <path d="M897 691h8v65l-8-2z" fill="#2c3f4c" />
    </g>

    {/* pipe lines, back to front */}
    <Pipe d="M985 553V720" dark />
    <Pipe d="M928 581L980 549Q986 547 986 560" />
    <Pipe d="M978 612V692" dark />
    <Pipe d="M1081 672V740" dark />
    <Pipe d="M867 630L1068 744Q1081 750 1081 735" />
    <Pipe d="M843 645L950 707Q958 710 958 700V684Q958 679 966 686" />
    <Pipe d="M970 685V708Q970 716 980 721L1178 834Q1188 840 1196 835L1228 816" />
    <Pipe d="M1030 716V740Q1030 748 1040 747" />
    <Pipe d="M1028 640V622Q1029 614 1038 608L1050 601" />
    <path d="M1047 603l11-7" stroke="#d9d9dc" strokeWidth="10" />
    <Pipe d="M931 578Q928 584 938 588L1153 711Q1163 717 1172 711L1236 675Q1244 671 1244 684V690" />
    <Pipe d="M1244 686V750" dark />
    <Pipe d="M1244 750V782" w={8} dark />
    <Rings
      points={[
        [972, 602],
        [984, 610],
        [1027, 634],
        [1076, 664],
        [1090, 672],
        [1148, 707],
        [1175, 710],
        [1234, 677],
        [977, 692],
        [1024, 717],
        [1072, 744],
        [980, 720],
        [1176, 833],
        [1200, 833],
        [985, 560, true],
        [978, 620, true],
        [1081, 680, true],
        [1081, 738, true],
        [1244, 686, true],
        [1244, 748, true],
        [958, 700, true],
        [970, 702, true],
        [1030, 738, true],
        [1028, 626, true],
      ]}
    />

    {/* U-bolts */}
    <path
      d="M905 690v-7q2-9 10-5M929 675v-7q2-7 9-3"
      fill="none"
      stroke="#3e5a6e"
      strokeWidth="2"
    />

    {/* vertical line valve */}
    <g stroke="#434448">
      <ellipse cx="977" cy="659" rx="13" ry="5" fill="#96979b" />
      <ellipse cx="977" cy="656" rx="8" ry="4" fill="#505155" />
      <ellipse cx="977" cy="652" rx="8" ry="4" fill="#606165" />
      <ellipse cx="977" cy="646" rx="13" ry="5" fill="#a3a4a8" />
      <ellipse cx="978" cy="645" rx="7" ry="3" fill="#606165" />
      <path d="M989 655l6-4 5 3v9l-6 3-5-3z" fill="#8b8c90" />
      <path d="M1000 651l11-5" stroke="#5a6a78" strokeWidth="2" />
      <ellipse cx="1013" cy="645" rx="4" ry="5" fill="none" stroke="#a9a9ac" />
      <ellipse cx="986" cy="661" rx="5" ry="6" fill="none" stroke="#a9a9ac" />
    </g>

    {[
      [950, 594],
      [1004, 626],
      [1053, 655],
      [1005, 704],
      [1048, 731],
    ].map(([x, y]) => (
      <Valve key={x * y} x={x} y={y} />
    ))}

    {/* connection markers */}
    <path d="M982 543h7v4h-7zM839 640h3v5h-3z" fill="#53c246" />
    <path d="M999 650h3v8h-3zM994 714h5v3h-5z" fill="#1d4d9c" />
    <path
      d="M923 578h2v7h-2zM1026 609h3v4h-3zM955 675h7v3h-7zM955 712h7v3h-7zM1026 749h7v2h-7zM1077 749h7v3h-7zM1160 720h7v2h-7zM1241 668h7v3h-7zM1182 844h9v2h-9z"
      fill="#5b1533"
    />
    <path d="M861 629l5 7M865 627l2-2" stroke="#e8a15f" strokeWidth="2" />
    <ellipse cx="843" cy="644" rx="4" ry="6" fill="#3b3b3e" />
    <ellipse cx="867" cy="630" rx="4" ry="6" fill="#4a4342" />

    {/* pump and motor */}
    <g stroke="#4a4b4c">
      <path d="M1225 824l31 18 66-39v6l-66 38-31-18z" fill="#7f8080" />
      <path d="M1225 823l14-8 30 16-13 8z" fill="#919292" />
      <path d="M1253 832l6-3v-8l-8 2z" fill="#6d6e6e" />
      <path
        d="M1284 788h13v24l-13 8zM1306 787l10-5v15l-10 5z"
        fill="#696a6a"
      />
      <path d="M1287 762l6-10 8 2v10z" fill="#7b7c7c" />
      <g transform="rotate(-28 1305 773)">
        <path
          d="M1288 756h29q7 5 7 17t-7 17h-29q-6-5-6-17t6-17z"
          fill="url(#motor)"
        />
        <path
          d="M1266 761h19q4 3 4 13t-4 12h-19q-5-3-5-12t5-13z"
          fill="url(#motor)"
        />
        <ellipse cx="1267" cy="774" rx="5" ry="11" fill="#707171" />
        <path d="M1243 770h25v8h-25z" fill="url(#motor)" />
      </g>
      <ellipse cx="1304" cy="757" rx="2" ry="3" fill="none" />
      <ellipse
        cx="1244"
        cy="808"
        rx="14"
        ry="20"
        fill="#7d7e7e"
        transform="rotate(12 1244 808)"
      />
      <ellipse
        cx="1240"
        cy="809"
        rx="9"
        ry="14"
        fill="#949595"
        transform="rotate(-18 1240 809)"
      />
      <ellipse
        cx="1232"
        cy="812"
        rx="7"
        ry="11"
        fill="#6a6b6c"
        transform="rotate(-20 1232 812)"
      />
      <path d="M1239 786h10v10h-10z" fill="#7d7e7e" />
      <ellipse cx="1244" cy="784" rx="10" ry="5" fill="#5e5f60" />
      <ellipse cx="1244" cy="780" rx="10" ry="5" fill="#8d8e8f" />
      <path d="M1253 783h6l-2 4v14h-2v-14z" fill="#707171" />
    </g>
    <Pipe d="M1244 770V780" w={8} dark />
    <Pipe d="M1217 822L1232 813" w={10} />
    <path d="M1240 758h2M1246 758h2" stroke="#d9b92c" strokeWidth="2" />

    {/* axis triad */}
    <g fontFamily="Open Sans, sans-serif" fontSize="21" textAnchor="middle">
      <path d="M450 897l-19 11" stroke="#167a16" />
      <path d="M450 897l19 11" stroke="#8d1717" />
      <path d="M450 897v24" stroke="#1414a0" />
      <path d="M413 917l7-14 6-1 7 9-2 8z" fill="#0c930c" />
      <path d="M467 910l8-8h5l7 15-20 2z" fill="#a41414" />
      <path d="M440 923q10-8 20 0l-10 16z" fill="#07079c" />
      <text x="406" y="930" fill="#0bd20b">
        Y
      </text>
      <text x="494" y="930" fill="#f01010">
        X
      </text>
      <text x="450" y="956" fill="#1010f0">
        Z
      </text>
    </g>
  </ModelSvg>
);

const ModelSvg = styled.svg`
  display: block;
  width: 100%;
  height: 100%;
`;

const ViewCube = () => (
  <Svg w={76} h={81}>
    <path d="M1 16L38 1l37 15-36 21z" fill="#8c8e92" />
    <path d="M1 16l38 21v43L5 57z" fill="#9a9b9f" />
    <path d="M39 37l36-21-4 42-32 22z" fill="#898b8f" />
    <path
      d="M1 16l38 21 36-21M39 37v43"
      fill="none"
      stroke="#6b6d72"
      strokeWidth="1"
    />
    <g
      fontFamily="Open Sans, sans-serif"
      fontSize="11"
      fill="#55585e"
      textAnchor="middle"
    >
      <text transform="translate(20 52) skewY(26)">TOP</text>
      <text transform="translate(60 48) rotate(-90) skewX(-22)">RIGHT</text>
      <text transform="translate(38 14) rotate(-158) skewX(-30)">BACK</text>
    </g>
  </Svg>
);

const ink = "#3d424b";
const face = "#b4b7bb";

const NavIcon = ({ children }) => (
  <svg
    width="38"
    height="38"
    viewBox="0 0 38 34"
    preserveAspectRatio="none"
    aria-hidden="true"
  >
    {children}
  </svg>
);

const NavigationBar = () => (
  <NavBarStyled aria-label="Navigation">
    <NavSmall aria-label="Close navigation bar">
      <Svg w={14} h={14}>
        <circle cx="7" cy="7" r="7" fill="#3f444c" />
        <path d="M4 4l6 6M10 4l-6 6" stroke="#d8dade" strokeWidth="2" />
      </Svg>
    </NavSmall>
    <NavButton aria-label="Steering wheel">
      <NavIcon>
        <path
          d="M19 2h15q3 0 3 3v13c0 9-8 15-18 15S1 27 1 18 8 2 19 2z"
          fill={face}
          stroke={ink}
        />
        <circle cx="19" cy="17" r="10" fill="#a5a8ad" stroke={ink} />
        <path d="M11 24l-4 4M27 24l4 4" stroke={ink} />
        <circle cx="19" cy="17" r="7" fill="#b9bcc0" />
      </NavIcon>
    </NavButton>
    <NavDot />
    <NavRule />
    <NavButton aria-label="Pan">
      <NavIcon>
        <path
          d="M13 33L8 24 1 19q0-3 4-2l7 4-2-14q2-3 4 0l3 10 2-15q3-3 4 0v15l5-13q3-2 3 1l-2 14 5-8q4-1 3 2l-7 14-4 6z"
          fill="#c6c8cb"
          stroke={ink}
        />
      </NavIcon>
    </NavButton>
    <NavButton aria-label="Zoom">
      <NavIcon>
        <path d="M1 1h17l6 6v21H1z" fill={face} stroke={ink} />
        <path d="M18 1v6h6z" fill="#e0e1e3" stroke={ink} />
        <path d="M30 27l7 6" stroke="#474b53" strokeWidth="4" />
        <circle cx="24" cy="22" r="8" fill="#c2c5c8" stroke={ink} />
      </NavIcon>
    </NavButton>
    <NavDot />
    <NavButton aria-label="Orbit">
      <NavIcon>
        <g fill="none" stroke="#4f545d" strokeWidth="2">
          <ellipse cx="19" cy="17" rx="6" ry="16" />
          <path d="M12 12C-3 14-3 21 12 22M17 23c20 0 26-9 10-11" />
          <path d="M19 13v8M15 17h8" />
        </g>
        <path d="M21 4l7 5-6 4zM26 14l8-3-1 7z" fill="#4f545d" />
      </NavIcon>
    </NavButton>
    <NavDot />
    <NavButton aria-label="Look at">
      <NavIcon>
        <path d="M2 10l9-8v6l16-6v8z" fill={face} stroke={ink} />
        <path d="M1 10h36v23H1z" fill={face} stroke={ink} strokeWidth="2" />
        <path d="M6 16h25v11H6z" fill="#8d9197" stroke={ink} strokeWidth="2" />
      </NavIcon>
    </NavButton>
    <NavSmall aria-label="Navigation bar options">
      <Svg w={14} h={14}>
        <circle cx="7" cy="7" r="7" fill="#3f444c" />
        <path d="M3 4h8v2H3zM3 7h8l-4 4z" fill="#d8dade" />
      </Svg>
    </NavSmall>
  </NavBarStyled>
);

const NavBarStyled = styled.nav`
  position: absolute;
  top: 161px;
  right: 1px;
  display: flex;
  flex-direction: column;
  align-items: center;
  width: 56px;
  padding: 1px 0 4px;
  border: 1px solid #41464f;
  border-radius: 3px;
  background: linear-gradient(#6c6f76, #666b74 50%, #6f7178);
`;

const NavButton = styled.button`
  ${bareButton}
  width: 100%;
  height: 54px;
`;

const NavSmall = styled.button`
  ${bareButton}
  align-self: flex-end;
  margin: 3px;
`;

const NavDot = styled.span`
  width: 2px;
  height: 2px;
  margin: 10px 0;
  background: #474c55;
`;

const NavRule = styled.span`
  width: 52px;
  height: 1px;
  margin-bottom: 4px;
  background: #5a5e67;
`;

/* --------------------------------- canvas --------------------------------- */

const Canvas = () => (
  <CanvasColumn>
    <Viewport>
      <Model />
      <DocControls>
        <IconButton aria-label="Minimize document">
          <Svg w={18} h={20}>
            <path d="M1 16h14v3H1z" fill="#e2ebf6" />
          </Svg>
        </IconButton>
        <IconButton aria-label="Tile documents">
          <Svg w={22} h={18}>
            <path
              d="M1 1h20v16H1zM12 1v16M12 9h9"
              fill="none"
              stroke="#e2ebf6"
              strokeWidth="2"
            />
          </Svg>
        </IconButton>
        <IconButton aria-label="Close document">
          <Svg w={20} h={18}>
            <path d="M2 1l16 16M18 1L2 17" stroke="#dce4ee" strokeWidth="3" />
          </Svg>
        </IconButton>
      </DocControls>
      <CubeHolder>
        <ViewCube />
      </CubeHolder>
      <NavigationBar />
    </Viewport>
    <DocTabs>
      <DocTab>
        <HomeIcon />
        Home
      </DocTab>
      <DocTab $active>
        Tank.iam
        <Svg w={16} h={16}>
          <path d="M1 1l14 14M15 1L1 15" stroke="#9aa0a8" strokeWidth="2" />
        </Svg>
      </DocTab>
      <TabMenu aria-label="Document list">
        <Svg w={26} h={22}>
          <path d="M0 0h26v4H0zM0 9h26v4H0zM0 18h26v4H0z" fill="#c2cbdb" />
        </Svg>
      </TabMenu>
    </DocTabs>
  </CanvasColumn>
);

const CanvasColumn = styled.main`
  display: flex;
  flex: 1;
  flex-direction: column;
  min-width: 0;
`;

const Viewport = styled.div`
  position: relative;
  flex: 1;
  min-height: 0;
  background: radial-gradient(
    ellipse 62% 80% at 48% 62%,
    #3a4552,
    #37404e 45%,
    #303745 75%,
    #292f3b 100%
  );
`;

const DocControls = styled.div`
  position: absolute;
  top: 3px;
  right: 2px;
  display: flex;
  gap: 7px;
`;

const CubeHolder = styled.div`
  position: absolute;
  top: 62px;
  right: 26px;
`;

const DocTabs = styled.div`
  display: flex;
  height: 41px;
  background: ${colors.frame};
  font-size: 19px;
`;

const DocTab = styled.button`
  ${bareButton}
  gap: ${(p) => (p.$active ? 12 : 6)}px;
  padding: ${(p) => (p.$active ? "1px 12px 0 13px" : "1px 14px 0 8px")};
  border-bottom: ${(p) => (p.$active ? 5 : 0)}px solid ${colors.blue};
  background: ${(p) => (p.$active ? "#3c4556" : "#3b4756")};
  color: ${(p) => (p.$active ? colors.text : "#ccd2da")};
`;

const TabMenu = styled.button`
  ${bareButton}
  margin: 0 7px 0 auto;
`;

/* ---------------------------------- page ---------------------------------- */

const StatusBar = () => (
  <StatusStyled>
    <StatusText>For Help, press F1</StatusText>
    <StatusCell>119</StatusCell>
    <StatusCell>83</StatusCell>
    <Grip>
      <Svg w={16} h={15}>
        <path
          d="M11 0h4v4h-4zM6 5h4v4H6zM11 5h4v4h-4zM1 11h4v4H1zM6 11h4v4H6zM11 11h4v4h-4z"
          fill="#dcdde0"
        />
      </Svg>
    </Grip>
  </StatusStyled>
);

const StatusStyled = styled.footer`
  display: flex;
  height: 42px;
  margin: 0 7px;
  background: ${colors.title};
  font-size: 19px;
`;

const StatusText = styled.p`
  margin: 0 auto 0 0;
  font-size: 20px;
  line-height: 46px;
`;

const StatusCell = styled.span`
  padding: 0 1px 0 9px;
  border-left: 2px solid #868b93;
  line-height: 37px;
`;

const Grip = styled.span`
  display: flex;
  align-items: flex-end;
  padding: 0 2px 3px 12px;
  border-left: 2px solid #868b93;
`;

const GlobalStyle = createGlobalStyle`
  * {
    box-sizing: border-box;
  }

  body {
    margin: 0;
    background: ${colors.frame};
  }
`;

const Shell = styled.div`
  display: flex;
  flex-direction: column;
  height: 100vh;
  border-bottom: 2px solid #c9a3a0;
  background: ${colors.frame};
  color: ${colors.text};
  font-family: ${uiFont};
`;

const Workspace = styled.div`
  display: flex;
  flex: 1;
  gap: 2px;
  min-height: 0;
  margin: 2px 7px 0;
`;

const FrameEdge = styled.div`
  height: 7px;
  border-bottom: 1px solid #0d1116;
`;

const App = () => (
  <Shell>
    <GlobalStyle />
    <TitleBar />
    <Ribbon />
    <Workspace>
      <Browser />
      <Canvas />
    </Workspace>
    <StatusBar />
    <FrameEdge />
  </Shell>
);

export default App;
